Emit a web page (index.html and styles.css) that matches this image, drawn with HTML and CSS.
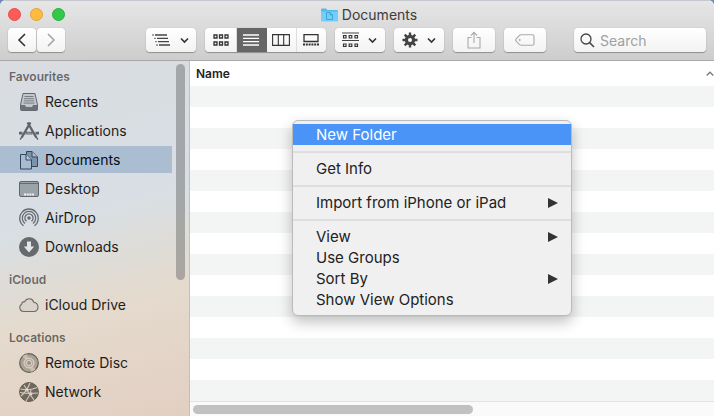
FILE: index.html
```html
<!DOCTYPE html>
<html lang="en">
<head>
    <meta charset="UTF-8">
    <meta name="viewport" content="width=device-width, initial-scale=1.0">
    <title>Documents</title>
    <link rel="stylesheet" href="styles.css">
</head>
<body>
    <div class="window">
        <!-- Title bar and toolbar -->
        <header class="header">
            <div class="titlebar">
                <div class="lights">
                    <button class="light red" aria-label="Close"></button>
                    <button class="light yellow" aria-label="Minimise"></button>
                    <button class="light green" aria-label="Zoom"></button>
                </div>
                <h1 class="title">
                    <svg width="17" height="14" viewBox="0 0 17 14">
                        <path d="M0 1.5Q0 .5 1 .5H5L6.5 2H16Q17 2 17 3V13H0Z" fill="#55b9e8"/>
                        <path d="M0 3.5H17V12.5Q17 13.5 16 13.5H1Q0 13.5 0 12.5Z" fill="#72cffa"/>
                        <path d="M5.5 4.5H9L11.5 7V11.5H5.5ZM9 4.5V7H11.5" fill="none" stroke="#3fa3d3"/>
                    </svg>
                    Documents
                </h1>
            </div>
            <div class="toolbar">
                <div class="nav-buttons">
                    <button class="tool small" aria-label="Back">
                        <svg width="10" height="16" viewBox="0 0 10 16"><path d="M8 2L2 8L8 14" fill="none" stroke="#333" stroke-width="1.6"/></svg>
                    </button>
                    <button class="tool small" aria-label="Forward">
                        <svg width="10" height="16" viewBox="0 0 10 16"><path d="M2 2L8 8L2 14" fill="none" stroke="#a5a5a5" stroke-width="1.6"/></svg>
                    </button>
                </div>
                <div class="space wide"></div>
                <button class="tool drop" aria-label="Arrange">
                    <svg width="19" height="14" viewBox="0 0 19 14">
                        <path d="M3 2H15M5 5.3H16M6 8.7H17M7 12H18" stroke="#444" stroke-width="1.3"/>
                        <path d="M0 2H2M2 5.3H4M3 8.7H5M4 12H6" stroke="#888" stroke-width="1.3"/>
                    </svg>
                    <svg width="9" height="7" viewBox="0 0 9 7"><path d="M1 1.5L4.5 5L8 1.5" fill="none" stroke="#333" stroke-width="1.6"/></svg>
                </button>
                <div class="views">
                    <button aria-label="Icon view">
                        <svg width="16" height="12" viewBox="0 0 16 12">
                            <path d="M1 1H4V4H1ZM6.5 1H9.5V4H6.5ZM12 1H15V4H12ZM1 8H4V11H1ZM6.5 8H9.5V11H6.5ZM12 8H15V11H12Z" fill="none" stroke="#333" stroke-width="1.3"/>
                        </svg>
                    </button>
                    <button class="active" aria-label="List view">
                        <svg width="16" height="12" viewBox="0 0 16 12"><path d="M0 1H16M0 4.3H16M0 7.7H16M0 11H16" stroke="#fff" stroke-width="1.3"/></svg>
                    </button>
                    <button aria-label="Column view">
                        <svg width="18" height="12" viewBox="0 0 18 12"><path d="M.6.6H17.4V11.4H.6ZM6.3.6V11.4M11.7.6V11.4" fill="none" stroke="#333" stroke-width="1.1"/></svg>
                    </button>
                    <button aria-label="Gallery view">
                        <svg width="16" height="12" viewBox="0 0 16 12">
                            <path d="M1 .7H15V7.5H1Z" fill="none" stroke="#333" stroke-width="1.3"/>
                            <path d="M0 10.5H16" stroke="#333" stroke-width="2" stroke-dasharray="2 .8"/>
                        </svg>
                    </button>
                </div>
                <button class="tool drop" aria-label="Group">
                    <svg width="17" height="16" viewBox="0 0 17 16">
                        <path d="M0 1H17M0 8.5H17" stroke="#444" stroke-width="1.2"/>
                        <path d="M1.5 3.5H4V6H1.5ZM7.2 3.5H9.8V6H7.2ZM13 3.5H15.5V6H13ZM1.5 12H4V14.5H1.5ZM7.2 12H9.8V14.5H7.2ZM13 12H15.5V14.5H13Z" fill="none" stroke="#333" stroke-width="1.2"/>
                    </svg>
                    <svg width="9" height="7" viewBox="0 0 9 7"><path d="M1 1.5L4.5 5L8 1.5" fill="none" stroke="#333" stroke-width="1.6"/></svg>
                </button>
                <button class="tool drop" aria-label="Action">
                    <svg width="16" height="16" viewBox="0 0 16 16">
                        <path d="M8 .5V15.5M.5 8H15.5M2.7 2.7L13.3 13.3M13.3 2.7L2.7 13.3" stroke="#444" stroke-width="2.4"/>
                        <circle cx="8" cy="8" r="5.2" fill="#444"/>
                        <circle cx="8" cy="8" r="2" fill="#fafafa"/>
                    </svg>
                    <svg width="9" height="7" viewBox="0 0 9 7"><path d="M1 1.5L4.5 5L8 1.5" fill="none" stroke="#333" stroke-width="1.6"/></svg>
                </button>
                <button class="tool single" aria-label="Share">
                    <svg width="14" height="18" viewBox="0 0 14 18"><path d="M4.5 6.5H1V17H13V6.5H9.5M7 12V1.5M4 4.5L7 1.3L10 4.5" fill="none" stroke="#aaa" stroke-width="1.1"/></svg>
                </button>
                <button class="tool single" aria-label="Tags">
                    <svg width="20" height="12" viewBox="0 0 20 12">
                        <path d="M6 .8H17.5Q19 .8 19 2.3V9.7Q19 11.2 17.5 11.2H6Q5 11.2 4 10.2L1 7Q.3 6 1 5L4 1.8Q5 .8 6 .8Z" fill="none" stroke="#aaa" stroke-width="1.1"/>
                        <circle cx="4.7" cy="6" r="1" fill="#aaa"/>
                    </svg>
                </button>
                <div class="space"></div>
                <label class="search">
                    <svg width="15" height="15" viewBox="0 0 15 15"><circle cx="6" cy="6" r="5" fill="none" stroke="#444" stroke-width="1.3"/><path d="M9.6 9.6L14 14" stroke="#444" stroke-width="1.5"/></svg>
                    <input type="text" placeholder="Search" aria-label="Search">
                </label>
            </div>
        </header>

        <div class="content">
            <aside class="sidebar">
                <nav class="places">
                    <h2>Favourites</h2>
                    <ul>
                        <li><a href="#">
                            <svg width="20" height="20" viewBox="0 0 20 20">
                                <path d="M4 1.5H16L18.5 13V17.5Q18.5 18.5 17.5 18.5H2.5Q1.5 18.5 1.5 17.5V13Z" fill="#c3c7cc" stroke="#60666c"/>
                                <path d="M1.5 13H6L7 15H13L14 13H18.5V17.5Q18.5 18.5 17.5 18.5H2.5Q1.5 18.5 1.5 17.5Z" fill="#6c7177"/>
                                <path d="M5.5 4.5H14.5M5 6.7H15M4.8 8.9H15.2M4.5 11.1H15.5" stroke="#777d83"/>
                            </svg>
                            Recents</a></li>
                        <li><a href="#">
                            <svg width="20" height="20" viewBox="0 0 20 20">
                                <path d="M8.6 1.5L17.3 16.5M11.4 1.5L2.7 16.5" stroke="#5f646a" stroke-width="2.4"/>
                                <path d="M0 12.2H3.5M6.5 12.2H13.5M16.5 12.2H20" stroke="#5f646a" stroke-width="2.8"/>
                                <path d="M7.5 12.2H12.5" stroke="#a7adb3"/>
                                <path d="M1 18.5L3 16M19 18.5L17 16" stroke="#5f646a" stroke-width="1.3"/>
                            </svg>
                            Applications</a></li>
                        <li><a href="#" class="selected" aria-current="page">
                            <svg width="20" height="20" viewBox="0 0 20 20">
                                <path d="M7.5 1.5H13L18.5 7V16.5H7.5Z" fill="#7d93aa" stroke="#34465a"/>
                                <path d="M13 1.5V7H18.5" fill="#a9bccf" stroke="#34465a"/>
                                <path d="M1.5 4.5H7L12.5 10V19H1.5Z" fill="#a9bbce" stroke="#34465a"/>
                                <path d="M7 4.5V10H12.5" fill="#b9c9d8" stroke="#34465a"/>
                            </svg>
                            Documents</a></li>
                        <li><a href="#">
                            <svg width="20" height="20" viewBox="0 0 20 20">
                                <rect x=".5" y="2.5" width="19" height="15" rx="1.5" fill="#9ba3aa" stroke="#5f666c"/>
                                <path d="M1 4.5H19" stroke="#646b72"/>
                                <path d="M5 15.5H15" stroke="#eef1f3" stroke-width="2" stroke-dasharray="2 .7"/>
                            </svg>
                            Desktop</a></li>
                        <li><a href="#">
                            <svg width="20" height="20" viewBox="0 0 20 20" fill="none" stroke="#666c71" stroke-width="1.3">
                                <path d="M4.5 17.8A9.3 9.3 0 1 1 15.5 17.8"/>
                                <path d="M6 15.5A6.7 6.7 0 1 1 14 15.5"/>
                                <path d="M7.5 13.3A4.1 4.1 0 1 1 12.5 13.3"/>
                                <circle cx="10" cy="10" r="1.8" fill="#666c71" stroke="none"/>
                            </svg>
                            AirDrop</a></li>
                        <li><a href="#">
                            <svg width="20" height="20" viewBox="0 0 20 20">
                                <circle cx="10" cy="10" r="10" fill="#666a6d"/>
                                <path d="M8 4.5H12V9.5H15.2L10 15.5L4.8 9.5H8Z" fill="#e4e5e5"/>
                            </svg>
                            Downloads</a></li>
                    </ul>
                    <h2>iCloud</h2>
                    <ul>
                        <li><a href="#">
                            <svg width="20" height="20" viewBox="0 0 20 20">
                                <path d="M4.5 16.5A4 4 0 0 1 2.6 9.2A3 3 0 0 1 5.8 6.6A4.8 4.8 0 0 1 14.8 7.3A4.7 4.7 0 0 1 15.5 16.5Z" fill="#d9d3cb" stroke="#706b65" stroke-width="1.1"/>
                            </svg>
                            iCloud Drive</a></li>
                    </ul>
                    <h2>Locations</h2>
                    <ul>
                        <li><a href="#">
                            <svg width="20" height="20" viewBox="0 0 20 20">
                                <circle cx="10" cy="10" r="9.3" fill="#aaa196" stroke="#665f57" stroke-width="1.2"/>
                                <path d="M10 10L3.5 3.5A9 9 0 0 1 8 1.2ZM10 10L16.5 16.5A9 9 0 0 1 12 18.8Z" fill="#c8beb2"/>
                                <circle cx="10" cy="10" r="5" fill="#b9afa4" stroke="#e2d8cb"/>
                                <circle cx="10" cy="10" r="2.5" fill="#9b9288" stroke="#e2d8cb"/>
                            </svg>
                            Remote Disc</a></li>
                        <li><a href="#">
                            <svg width="20" height="20" viewBox="0 0 20 20">
                                <circle cx="10" cy="10" r="9.4" fill="#716960" stroke="#625b53"/>
                                <path d="M1.5 7Q10 9 18 5.5M2 14Q8 9 11 1M5 3Q9 10 15 18M1 10.5Q10 12 19 11M12 8Q11 14 7 19" fill="none" stroke="#d5c9bb" stroke-width="1.1"/>
                                <circle cx="8" cy="8" r="1.6" fill="#e0d4c6"/>
                                <circle cx="12" cy="12" r="1.4" fill="#e0d4c6"/>
                            </svg>
                            Network</a></li>
                    </ul>
                </nav>
                <div class="scroll-y"><div class="thumb"></div></div>
            </aside>

            <main class="files">
                <table class="columns">
                    <thead>
                        <tr>
                            <th scope="col">Name</th>
                            <th class="sort"><svg width="8" height="5" viewBox="0 0 8 5"><path d="M.7 4.5L4 1.2L7.3 4.5" fill="none" stroke="#777" stroke-width="1.3"/></svg></th>
                        </tr>
                    </thead>
                </table>
                <div class="rows"></div>
                <div class="scroll-x"><div class="thumb"></div></div>
            </main>
        </div>
    </div>

    <!-- Context menu -->
    <div class="menu" role="menu">
        <button class="active" role="menuitem">New Folder</button>
        <hr>
        <button role="menuitem">Get Info</button>
        <hr>
        <button class="submenu" role="menuitem">Import from iPhone or iPad</button>
        <hr>
        <button class="submenu" role="menuitem">View</button>
        <button role="menuitem">Use Groups</button>
        <button class="submenu" role="menuitem">Sort By</button>
        <button role="menuitem">Show View Options</button>
    </div>
</body>
</html>
```
FILE: styles.css
```css
/* General styling */
* {
    box-sizing: border-box;
}

body {
    margin: 0;
    font-family: Inter, "Liberation Sans", sans-serif;
    font-size: 14px;
    color: #222;
    background: #6d8bb0;
}

button {
    font: inherit;
    color: inherit;
    border: none;
    padding: 0;
    margin: 0;
}

svg {
    display: block;
    flex: none;
}

.window {
    display: flex;
    flex-direction: column;
    min-height: 100vh;
    border-radius: 6px 6px 0 0;
    overflow: hidden;
    background: #fff;
}

/* Title bar and toolbar */
.header {
    height: 61px;
    border-top: 1px solid #c6c8d0;
    border-bottom: 1px solid #a8a8a8;
    background: linear-gradient(#e6e6e6, #cdcdcd);
}

.titlebar {
    display: grid;
    grid-template-columns: 1fr auto 1fr;
    align-items: center;
    height: 27px;
    padding: 0 8px;
}

.lights {
    display: flex;
    gap: 9px;
}

.light {
    width: 13px;
    height: 13px;
    border-radius: 50%;
}

.light.red {
    background: #fc5b57;
    border: 1px solid #e2504c;
}

.light.yellow {
    background: #fdbc40;
    border: 1px solid #e0a136;
}

.light.green {
    background: #34c84a;
    border: 1px solid #2bac3c;
}

.title {
    display: flex;
    align-items: center;
    gap: 4px;
    margin: 0 0 0 24px;
    font-size: 14px;
    font-weight: 400;
    color: #3c3c3c;
}

.toolbar {
    display: flex;
    gap: 9px;
    padding: 0 8px;
}

.nav-buttons {
    display: flex;
    gap: 1px;
}

.space {
    flex: 1;
}

.space.wide {
    flex: 6;
}

.tool,
.views,
.search {
    display: flex;
    align-items: center;
    justify-content: center;
    height: 24px;
    border-radius: 4px;
    background: linear-gradient(#fff, #f3f3f3);
    box-shadow: 0 0 1px rgba(0, 0, 0, 0.25), 0 1px 1px rgba(0, 0, 0, 0.3);
}

.tool.small {
    width: 28px;
}

.tool.drop {
    width: 50px;
    gap: 9px;
}

.tool.single {
    width: 42px;
}

.views {
    width: 121px;
    padding-left: 2px;
    overflow: hidden;
}

.views button {
    display: flex;
    flex: 1;
    align-items: center;
    justify-content: center;
    height: 24px;
    background: none;
    border-right: 1px solid #ddd;
}

.views button:last-child {
    border-right: none;
}

.views .active {
    background: #666;
    border-color: #666;
}

.search {
    width: 132px;
    gap: 5px;
    padding: 0 6px;
}

.search input {
    flex: 1;
    min-width: 0;
    padding: 0;
    border: none;
    outline: none;
    background: none;
    font: inherit;
}

.search input::placeholder {
    color: #a0a0a0;
}

.content {
    display: flex;
    flex: 1;
}

/* Sidebar */
.sidebar {
    display: flex;
    width: 190px;
    border-right: 1px solid #c4bfbb;
    background: linear-gradient(165deg, #d9dce1 0%, #d8dfe4 42%, #e4dacd 68%, #e2cfc2 100%);
}

.places {
    flex: 1;
    padding-top: 5px;
}

.places h2 {
    margin: 0;
    padding-left: 9px;
    font-size: 12px;
    font-weight: 600;
    line-height: 22px;
    color: rgba(0, 0, 0, 0.55);
}

.places ul {
    display: flex;
    flex-direction: column;
    gap: 2px;
    margin: 0 0 9px;
    padding: 0;
    list-style: none;
}

.places a {
    display: flex;
    align-items: center;
    gap: 6px;
    height: 27px;
    padding-left: 19px;
    color: #1d1d1d;
    text-decoration: none;
}

.places .selected {
    background: #abbdd0;
    color: #000d20;
}

.scroll-y {
    width: 17px;
    padding: 3px 4px;
}

.thumb {
    border-radius: 5px;
}

.scroll-y .thumb {
    height: 62%;
    background: rgba(90, 90, 90, 0.42);
}

/* File list */
.files {
    display: flex;
    flex: 1;
    flex-direction: column;
    min-width: 0;
}

.columns {
    width: 100%;
    height: 25px;
    border-collapse: collapse;
}

.columns th {
    padding: 0 0 0 6px;
    font-size: 12px;
    font-weight: 600;
    text-align: left;
}

.columns .sort {
    width: 8px;
    padding: 0;
}

.rows {
    flex: 1;
    background: repeating-linear-gradient(#f3f5f4 0, #f3f5f4 21px, #fff 21px, #fff 42px);
}

.scroll-x {
    height: 15px;
    padding: 3px;
    border-top: 1px solid #e3e3e3;
    background: #fafafa;
}

.scroll-x .thumb {
    width: 54%;
    height: 9px;
    background: #c1c1c1;
}

/* Context menu */
.menu {
    position: absolute;
    top: 120px;
    left: 292px;
    width: 280px;
    padding: 3px 0 5px;
    border: 1px solid #bbb;
    border-radius: 6px;
    background: #f0f0f0;
    box-shadow: 0 6px 14px rgba(0, 0, 0, 0.25);
    font-size: 15px;
}

.menu button {
    display: flex;
    align-items: center;
    justify-content: space-between;
    width: 100%;
    height: 21px;
    padding: 0 13px 0 23px;
    background: none;
}

.menu .active {
    background: #4a94f7;
    color: #fff;
}

/* Arrow that opens a submenu */
.menu .submenu::after {
    content: "";
    border: 5px solid transparent;
    border-left: 10px solid #333;
    border-right: none;
}

.menu hr {
    height: 2px;
    margin: 6px 0 5px;
    border: none;
    background: #dedede;
}
```
